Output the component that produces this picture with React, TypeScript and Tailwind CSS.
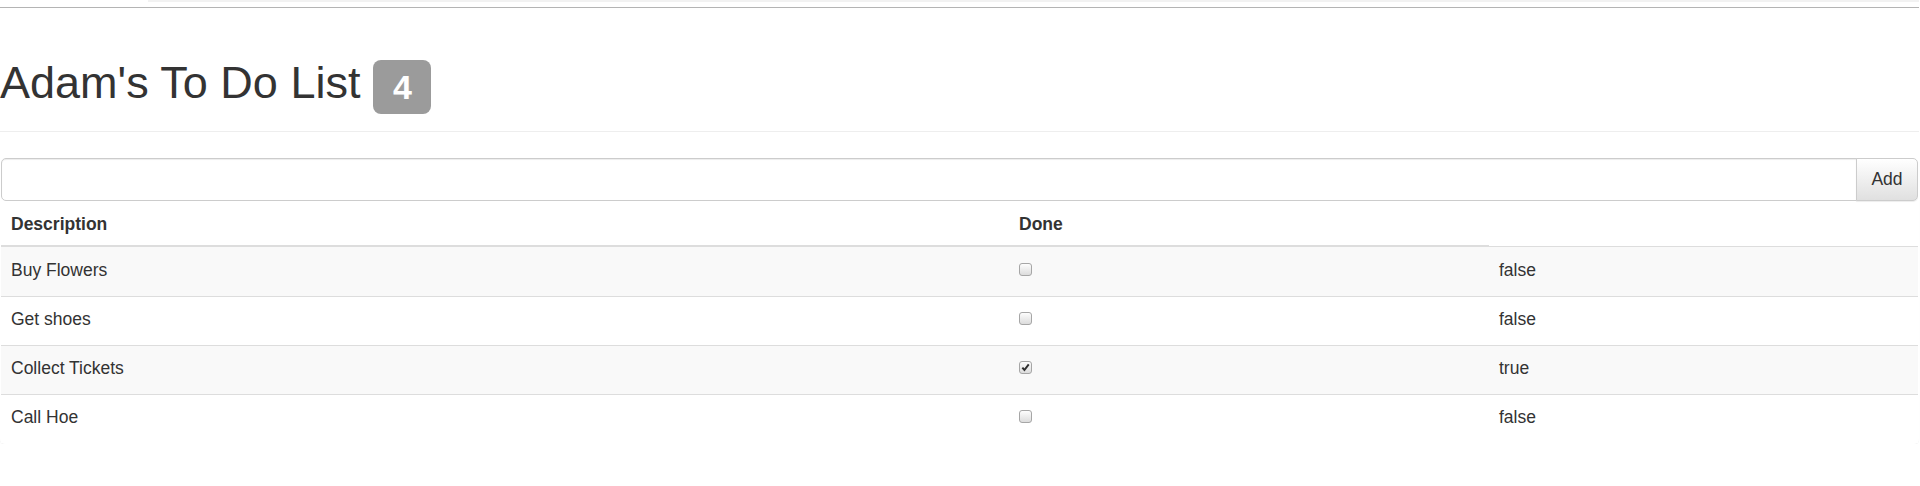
import React from 'react';

interface Todo {
    action: string;
    done: boolean;
}

const ITEMS: Todo[] = [
    { action: 'Buy Flowers', done: false },
    { action: 'Get shoes', done: false },
    { action: 'Collect Tickets', done: true },
    { action: 'Call Hoe', done: false },
];

function Checkbox({ checked }: { checked: boolean }) {
    return (
        <span className="inline-flex items-center justify-center w-[13px] h-[13px] mt-[2px] rounded-[3px] border border-[#a6a6a6] bg-gradient-to-b from-[#fdfdfd] to-[#dcdcdc]">
            {checked && (
                <svg viewBox="0 0 10 10" className="w-[9px] h-[9px]">
                    <path d="M1.5 5.2 L3.8 7.8 L8.6 1.6" fill="none" stroke="#2e2e2e" strokeWidth="2.2" />
                </svg>
            )}
        </span>
    );
}

export default function App() {
    return (
        <div className="w-[1919px] bg-white text-[#333] font-['Liberation_Sans',Arial,sans-serif]">
            {/* top strip */}
            <div className="h-[8px] border-b border-[#b4b4b4] flex">
                <div className="w-[148px]" />
                <div className="flex-1 h-[2px] bg-[#f2f2f2]" />
            </div>

            {/* page header */}
            <div className="mt-[50px] pb-[17px] border-b border-[#eee] flex items-start">
                <h1 className="text-[45px] leading-[50px] font-normal">Adam's To Do List</h1>
                <span className="ml-[13px] mt-[2px] w-[58px] h-[54px] rounded-[8px] bg-[#9b9b9b] text-white font-bold text-[34px] leading-none flex items-center justify-center">
                    {ITEMS.length}
                </span>
            </div>

            <div className="mt-[25px] border border-transparent rounded-[5px] shadow-[0_1px_1px_rgba(0,0,0,0.05)]">
                {/* input group */}
                <div className="flex h-[43px]">
                    <input
                        className="flex-1 h-full border border-[#ccc] rounded-l-[5px] shadow-[inset_0_1px_1px_rgba(0,0,0,0.075)] px-[15px] text-[17.5px] outline-none"
                    />
                    <button className="w-[62px] h-full -ml-px border border-[#ccc] rounded-r-[5px] bg-gradient-to-b from-white to-[#e0e0e0] text-[17.5px] text-[#333] shadow-[0_1px_1px_rgba(0,0,0,0.075)]">
                        Add
                    </button>
                </div>

                {/* table */}
                <div className="text-[17.5px] leading-[25px]">
                    <div className="grid grid-cols-[1008px_480px_1fr] h-[46px]">
                        <div className="px-[10px] pt-[11px] font-bold border-b-2 border-[#ddd]">Description</div>
                        <div className="px-[10px] pt-[11px] font-bold border-b-2 border-[#ddd]">Done</div>
                        <div className="border-b border-[#ddd]" />
                    </div>
                    {ITEMS.map((item, i) => (
                        <div
                            key={item.action}
                            className={
                                'grid grid-cols-[1008px_480px_1fr] h-[49px] ' +
                                (i % 2 === 0 ? 'bg-[#f9f9f9] ' : 'bg-white ') +
                                (i === 0 ? 'pt-[11px]' : 'pt-[10px] border-t border-[#ddd]')
                            }
                        >
                            <div className="px-[10px]">{item.action}</div>
                            <div className="px-[10px] flex items-start pt-[3px]">
                                <Checkbox checked={item.done} />
                            </div>
                            <div className="px-[10px]">{item.done ? 'true' : 'false'}</div>
                        </div>
                    ))}
                </div>
            </div>
        </div>
    );
}
